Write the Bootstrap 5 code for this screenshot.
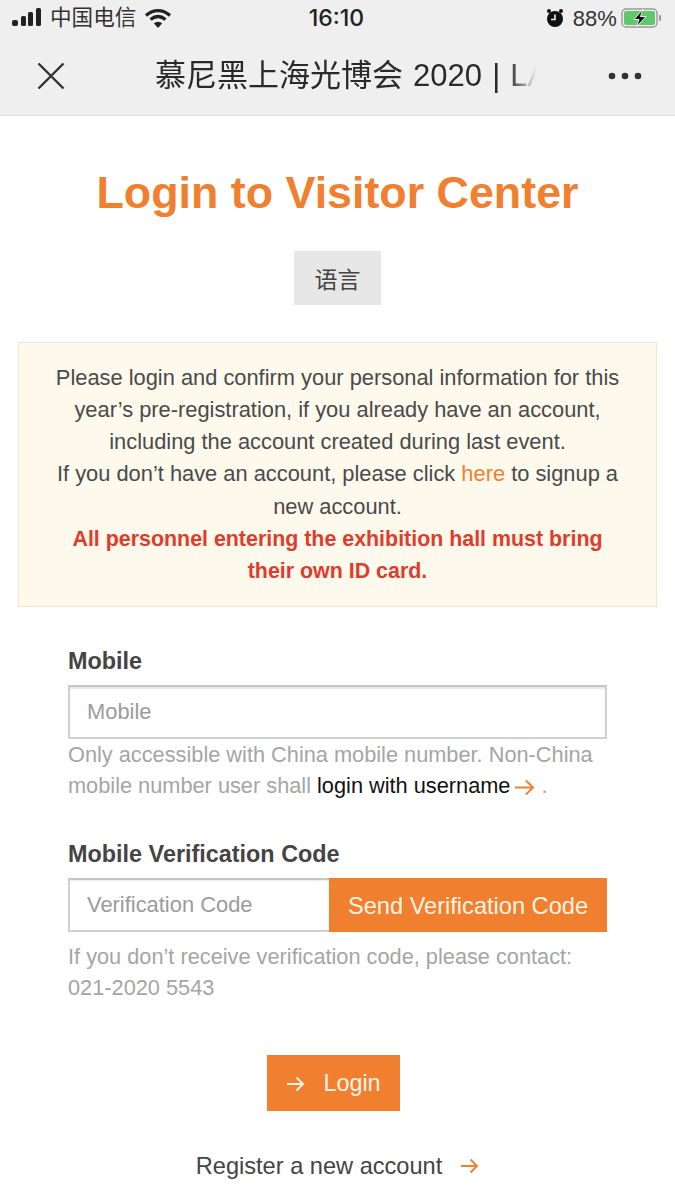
<!DOCTYPE html>
<html>
<head>
  <title>Login to Visitor Center</title>
  <meta charset="UTF-8">
  <link href="https://cdn.jsdelivr.net/npm/bootstrap@5.3.0/dist/css/bootstrap.min.css" rel="stylesheet">
  <style>
    html, body { height: 1200px; overflow: hidden; }
    body { font-family: "Liberation Sans", "Noto Sans CJK SC", sans-serif; background: #fff; color: #444; }
    .wx-top { height: 116px; background: #efefef; border-bottom: 1px solid #e2e2e2; color: #222; }
    .status-row { height: 36px; padding: 0 12px; }
    .status-col { width: 33.33%; }
    .carrier { font-size: 21.6px; color: #333; }
    .clock { font-size: 23px; font-weight: 500; font-family: Inter, "Liberation Sans", sans-serif; padding-right: 2px; }
    .batt-pct { font-size: 22px; color: #333; }
    .title-row { height: 80px; padding: 0 33px 0 36px; }
    .title-text { flex: none; margin-left: 89px; font-size: 31px; line-height: 40px; white-space: nowrap; word-spacing: 1.5px; color: #2a2a2a;
      -webkit-mask-image: linear-gradient(to right, #000 90%, transparent 97%); mask-image: linear-gradient(to right, #000 90%, transparent 97%); }
    .page-head { color: #f08030; font-size: 44.8px; font-weight: 700; line-height: 50px; margin: 51px 0 34px; }
    .lang-btn { width: 87px; height: 54px; background: #e7e7e7; border: 0; border-radius: 0; font-size: 23px; color: #444; padding: 4px 0 0; }
    .lang-btn:hover { background: #e7e7e7; color: #444; }
    .notice-box { margin: 37px 18px 0; height: 265px; padding: 18.6px 30px 0; background: #fdf9ec; border: 1px solid #fae3c8;
      font-size: 21.85px; line-height: 32.3px; color: #4a4a4a; text-align: center; }
    .notice-box a { color: #f08030; text-decoration: none; }
    .notice-warn { color: #e03c2c; font-weight: 700; font-size: 21.4px; }
    .form-area { padding: 0 68px; }
    .lbl { font-size: 23.4px; font-weight: 700; color: #444; line-height: 30px; margin: 0 0 9px; display: block; }
    .text-in { height: 54px; border: 2px solid #d0d0d0; border-top-color: #c6c6c6; border-radius: 0; font-size: 21.9px; padding: 0 17px;
      box-shadow: inset 0 2px 2px rgba(0,0,0,.1); color: #444; }
    .text-in::placeholder { color: #9b9b9b; }
    .help-line { font-size: 21.75px; line-height: 31px; color: #a5a5a5; margin: 0; }
    .help-line a { color: #111; text-decoration: none; }
    .code-in { width: 261px; flex: none !important; border-right: 0; box-shadow: inset 0 1px 1px rgba(0,0,0,.08); }
    .code-btn { flex: 1; height: 54px; background: #f08030; border: 0; border-radius: 0; color: #fff4e4; font-size: 23.6px; padding: 3px 0 0; white-space: nowrap; }
    .code-btn:hover, .go-btn:hover { background: #f08030; color: #fff4e4; }
    .go-btn { width: 133px; height: 56px; background: #f08030; border: 0; border-radius: 0; color: #fff4e4; font-size: 23.4px; padding: 2px 0 0; gap: 18px; }
    .go-wrap { margin-top: 52px; padding-right: 8px; }
    .reg-wrap { margin-top: 40px; }
    .reg-link { font-size: 23.6px; color: #444; text-decoration: none; gap: 18px; line-height: 30px; }
    .arrow-ic { flex: none; }
  </style>
</head>
<body>

<div class="wx-top">
  <div class="status-row d-flex align-items-center">
    <div class="status-col d-flex align-items-center gap-2">
      <svg width="30" height="19" viewBox="0 0 30 19" fill="#222"><rect x="0" y="12" width="6" height="6" rx="2"/><rect x="9" y="8" width="5" height="10" rx="1.5"/><rect x="16" y="4" width="5" height="14" rx="1.5"/><rect x="24" y="0" width="5" height="18" rx="1.5"/></svg>
      <span class="carrier">中国电信</span>
      <svg width="28" height="20" viewBox="0 0 28 20" fill="none" stroke="#222" stroke-width="3.2"><path d="M2 7.500C9.500 1 18.500 1 26 7.500"/><path d="M6.500 11.500C11.500 7.500 16.500 7.500 21.500 11.500"/><path d="M14 20L9.800 15.200C12.500 13.200 15.500 13.200 18.200 15.200Z" fill="#222" stroke="none"/></svg>
    </div>
    <div class="status-col text-center clock">16:10</div>
    <div class="status-col d-flex align-items-center justify-content-end">
      <svg width="20" height="20" viewBox="0 0 20 20"><circle cx="10" cy="11" r="8" fill="#111"/><circle cx="4" cy="3" r="2" fill="#111"/><circle cx="16" cy="3" r="2" fill="#111"/><path d="M10 6.500V11.500H6" fill="none" stroke="#efefef" stroke-width="1.600"/></svg>
      <span class="batt-pct ms-2 me-1">88%</span>
      <svg width="42" height="20" viewBox="0 0 42 20"><rect x="1" y="1" width="35" height="18" rx="4" fill="none" stroke="#999" stroke-width="1.400"/><rect x="3" y="3" width="31" height="14" rx="2" fill="#5fc86a"/><rect x="38" y="7" width="2" height="6" rx="1" fill="#999"/><path d="M22 1L13 11.500H18L15.500 19L25 8.500H19.500Z" fill="#111" stroke="#efefef" stroke-width="1"/></svg>
    </div>
  </div>
  <div class="title-row d-flex align-items-center">
    <svg width="30" height="30" viewBox="0 0 30 30" fill="none" stroke="#333" stroke-width="2.400"><path d="M2.500 2.500L27.500 27.500M27.500 2.500L2.500 27.500"/></svg>
    <div class="title-text">慕尼黑上海光博会 2020 | LA</div>
    <svg class="ms-auto" width="34" height="8" viewBox="0 0 34 8" fill="#333"><circle cx="4" cy="4" r="3.300"/><circle cx="17" cy="4" r="3.300"/><circle cx="30" cy="4" r="3.300"/></svg>
  </div>
</div>

<h1 class="page-head text-center">Login to Visitor Center</h1>

<div class="text-center">
  <button type="button" class="btn lang-btn">语言</button>
</div>

<div class="notice-box">
  Please login and confirm your personal information for this year’s pre-registration, if you already have an account, including the account created during last event.<br>
  If you don’t have an account, please click <a href="#">here</a> to signup a new account.<br>
  <span class="notice-warn">All personnel entering the exhibition hall must bring their own ID card.</span>
</div>

<form class="form-area" style="margin-top:39px">
  <label class="lbl">Mobile</label>
  <input type="text" class="form-control text-in" placeholder="Mobile">
  <p class="help-line">Only accessible with China mobile number. Non-China mobile number user shall <a href="#">login with username</a><svg class="ms-1" width="21" height="17" viewBox="0 0 21 17" fill="none" stroke="#f08030" stroke-width="2"><path d="M1 8.500H19M12 1.500L19 8.500L12 15.500"/></svg> .</p>

  <label class="lbl" style="margin-top:38px">Mobile Verification Code</label>
  <div class="d-flex">
    <input type="text" class="form-control text-in code-in" placeholder="Verification Code">
    <button type="button" class="btn code-btn">Send Verification Code</button>
  </div>
  <p class="help-line" style="margin-top:9px">If you don’t receive verification code, please contact: 021-2020 5543</p>

  <div class="text-center go-wrap">
    <button type="button" class="btn go-btn d-inline-flex align-items-center justify-content-center">
      <svg class="arrow-ic" width="19" height="16" viewBox="0 0 19 16" fill="none" stroke="#fff4e4" stroke-width="2"><path d="M1 8H17M10.500 1.500L17 8L10.500 14.500"/></svg>
      Login
    </button>
  </div>
  <div class="d-flex justify-content-center reg-wrap">
    <a href="#" class="reg-link d-inline-flex align-items-center">Register a new account
      <svg class="arrow-ic" width="19" height="16" viewBox="0 0 19 16" fill="none" stroke="#f08030" stroke-width="2"><path d="M1 8H17M10.500 1.500L17 8L10.500 14.500"/></svg>
    </a>
  </div>
</form>

<script src="https://cdn.jsdelivr.net/npm/bootstrap@5.3.0/dist/js/bootstrap.bundle.min.js"></script>
</body>
</html>
